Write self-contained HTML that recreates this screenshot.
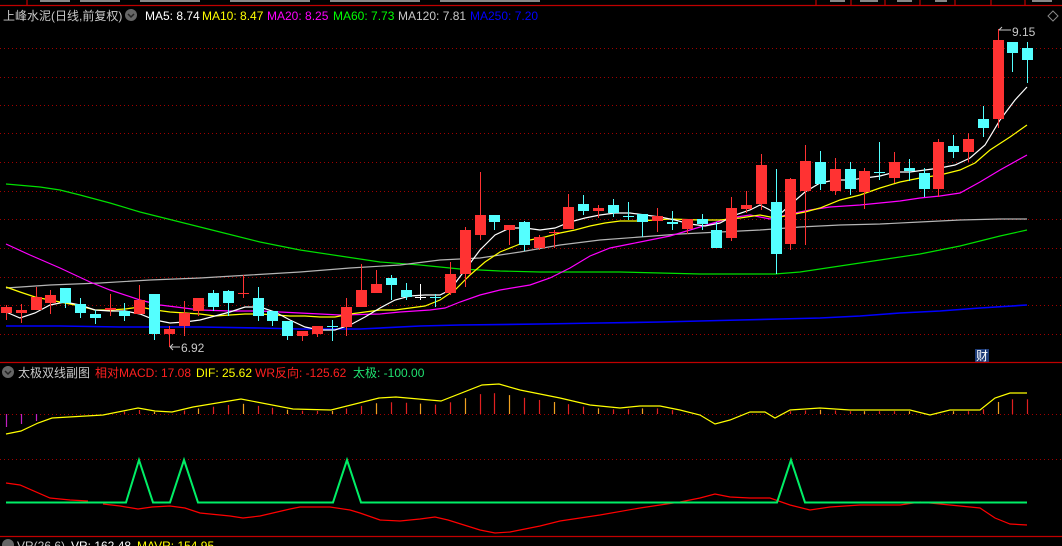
<!DOCTYPE html>
<html><head><meta charset="utf-8">
<style>
html,body{margin:0;padding:0;background:#000;width:1062px;height:546px;overflow:hidden;}
svg{position:absolute;left:0;top:0;}
.t{font-family:"Liberation Sans","Noto Sans CJK SC",sans-serif;font-size:12px;}
</style></head><body>
<svg id="s" width="1062" height="546" viewBox="0 0 1062 546" xmlns="http://www.w3.org/2000/svg">
<rect width="1062" height="546" fill="#000"/>
<g stroke="#c00000" stroke-width="1.2">
<line x1="0" y1="5.5" x2="1062" y2="5.5"/>
<line x1="27" y1="0" x2="27" y2="5"/>
<line x1="816" y1="0" x2="816" y2="5"/><line x1="851" y1="0" x2="851" y2="5"/>
<line x1="885" y1="0" x2="885" y2="5"/><line x1="920" y1="0" x2="920" y2="5"/>
<line x1="955" y1="0" x2="955" y2="5"/><line x1="991" y1="0" x2="991" y2="5"/>
<line x1="1025" y1="0" x2="1025" y2="5"/>
</g>
<g fill="#888"><rect x="40" y="0" width="30" height="2"/><rect x="80" y="0" width="40" height="2"/><rect x="140" y="0" width="60" height="2"/><rect x="230" y="0" width="80" height="2"/><rect x="330" y="0" width="90" height="2"/><rect x="440" y="0" width="100" height="2"/><rect x="830" y="0" width="15" height="2"/><rect x="860" y="0" width="18" height="2"/><rect x="897" y="0" width="15" height="2"/><rect x="935" y="0" width="12" height="2"/><rect x="1032" y="0" width="20" height="2"/></g>
<g id="grid" stroke="#a00000" stroke-width="1" stroke-dasharray="1,3"></g>
<text class="t" x="3" y="20" fill="#c8c8c8">上峰水泥(日线,前复权)</text>
<circle cx="131" cy="15" r="6" fill="#666"/><path d="M128 14 l3 3 l3 -3" stroke="#222" stroke-width="1.5" fill="none"/>
<text class="t" x="145" y="20" fill="#fff">MA5: 8.74</text>
<text class="t" x="202" y="20" fill="#ffff00">MA10: 8.47</text>
<text class="t" x="267" y="20" fill="#ff00ff">MA20: 8.25</text>
<text class="t" x="333" y="20" fill="#00ff00">MA60: 7.73</text>
<text class="t" x="398" y="20" fill="#c8c8c8">MA120: 7.81</text>
<text class="t" x="470" y="20" fill="#0000ff">MA250: 7.20</text>
<path d="M1053 11 l5 5 l-5 5 l-5 -5 z" stroke="#888" fill="none"/>
<g id="lines" fill="none" stroke-width="1.2"></g>
<g id="candles"></g>
<text class="t" x="1012" y="36" fill="#c8c8c8">9.15</text>
<path d="M999 30 l3 -3 M999 30 h12" stroke="#c8c8c8" fill="none"/>
<text class="t" x="181" y="352" fill="#c8c8c8">6.92</text>
<path d="M170 347 l3 -3 M170 347 l3 3 M170 347 h10" stroke="#c8c8c8" fill="none"/>
<rect x="975" y="349" width="14" height="13" fill="#1e3c78"/>
<text class="t" x="976" y="360" fill="#fff" font-size="11">财</text>
<line x1="0" y1="362.5" x2="1062" y2="362.5" stroke="#c00000" stroke-width="1.2"/>
<circle cx="8" cy="372" r="6" fill="#666"/><path d="M5 371 l3 3 l3 -3" stroke="#222" stroke-width="1.5" fill="none"/>
<text class="t" x="18" y="377" fill="#c8c8c8">太极双线副图</text>
<text class="t" x="95" y="377" fill="#ff2020">相对MACD: 17.08</text>
<text class="t" x="196" y="377" fill="#ffff00">DIF: 25.62</text>
<text class="t" x="255" y="377" fill="#ff2020">WR反向: -125.62</text>
<text class="t" x="353" y="377" fill="#20e070">太极: -100.00</text>
<line x1="0" y1="414.5" x2="1062" y2="414.5" stroke="#a00000" stroke-dasharray="1,3"/>
<line x1="0" y1="459.5" x2="1062" y2="459.5" stroke="#a00000" stroke-dasharray="1,3"/>
<g id="sub" fill="none"></g>
<line x1="0" y1="536.5" x2="1062" y2="536.5" stroke="#c00000" stroke-width="1.2"/>
<circle cx="8" cy="545" r="6" fill="#666"/>
<text class="t" x="17" y="550" fill="#c8c8c8">VR(26,6)</text>
<text class="t" x="71" y="550" fill="#fff">VR: 162.48</text>
<text class="t" x="137" y="550" fill="#ffff00">MAVR: 154.95</text>
</svg>
<script>
(function(){
var NS="http://www.w3.org/2000/svg";
function el(p,t,a){var e=document.createElementNS(NS,t);for(var k in a)e.setAttribute(k,a[k]);p.appendChild(e);return e;}
var g=document.getElementById('grid');
[48,77,105,133,162,191,219,248,277,305,334].forEach(function(y){el(g,'line',{x1:0,y1:y+.5,x2:1062,y2:y+.5});});
function pl(p,pts,c,w){el(p,'polyline',{points:pts.map(function(a){return a.join(',')}).join(' '),stroke:c,'stroke-width':w||1.2,fill:'none'});}
var L=document.getElementById('lines');
pl(L,[[6,184],[40,187],[60,190],[80,195],[110,203],[140,212],[180,222],[220,232],[260,242],[300,250],[340,256],[380,262],[420,265],[440,267],[460,269],[480,270],[500,271],[540,272],[580,272],[620,272],[660,273],[700,274],[740,274],[775,274],[800,272],[840,266],[880,260],[920,254],[960,246],[1000,236],[1027,230]],'#00e000');
pl(L,[[6,288],[50,285],[100,283],[150,280],[200,278],[250,275],[300,272],[350,268],[400,265],[440,260],[480,258],[520,252],[560,245],[600,240],[640,237],[680,234],[720,232],[760,230],[800,227],[840,225],[880,224],[920,222],[960,220],[1000,219],[1027,219]],'#b4b4b4');
pl(L,[[6,326],[60,326],[120,327],[200,327],[260,328],[300,329],[360,329],[420,326],[460,325],[540,324],[600,323],[660,322],[700,321],[740,320],[780,319],[820,318],[860,316],[900,313],[940,311],[980,308],[1027,305]],'#0000ff',1.6);
pl(L,[[6,244],[30,255],[60,268],[90,282],[110,290],[140,300],[160,305],[200,310],[230,311],[260,311],[300,313],[340,315],[380,314],[400,312],[430,310],[445,308],[460,302],[480,295],[500,290],[530,285],[550,278],[570,268],[590,256],[610,248],[630,244],[650,240],[670,236],[690,230],[710,224],[730,218],[750,215],[770,219],[790,214],[810,210],[830,207],[860,205],[880,203],[900,201],[920,198],[940,196],[960,193],[980,182],[1000,170],[1027,155]],'#ff00ff');
pl(L,[[6,287],[20,292],[35,297],[50,300],[65,303],[80,306],[95,310],[110,310],[125,309],[140,307],[155,310],[170,312],[185,313],[200,314],[215,316],[230,315],[245,314],[260,314],[275,315],[290,316],[305,316],[320,317],[335,317],[350,314],[365,312],[380,310],[395,310],[410,308],[425,306],[440,300],[455,290],[470,275],[485,262],[500,252],[515,246],[530,240],[545,237],[560,233],[575,230],[590,226],[605,223],[620,221],[640,221],[655,220],[670,219],[700,220],[720,220],[740,218],[760,215],[775,218],[790,215],[805,212],[820,208],[840,200],[860,195],[880,188],[900,182],[920,178],[940,175],[960,170],[975,163],[990,150],[1010,137],[1027,125]],'#ffff00');
pl(L,[[6,312],[20,318],[35,313],[50,305],[65,302],[80,305],[95,310],[110,311],[125,311],[140,314],[155,320],[170,323],[185,322],[200,320],[215,316],[230,312],[245,307],[260,307],[275,312],[290,320],[305,327],[320,330],[335,330],[350,325],[365,317],[380,308],[395,300],[410,296],[425,295],[440,295],[450,290],[465,270],[480,250],[495,235],[510,228],[525,228],[540,230],[555,228],[570,222],[585,218],[600,215],[615,213],[630,213],[645,215],[660,217],[675,220],[690,224],[705,226],[720,223],[735,215],[750,210],[760,205],[770,210],[778,216],[790,205],[805,192],[820,183],[835,180],[850,180],[865,178],[880,176],[895,172],[910,172],[925,170],[940,168],[955,165],[970,158],[985,145],[1000,120],[1015,100],[1027,87]],'#ffffff');
var C=[[307,313,305,320,'r'],[310,313,304,323,'r'],[297,310,287,310,'r'],[295,303,290,314,'r'],[288,303,288,308,'c'],[304,313,298,318,'c'],[314,318,310,324,'c'],[308,310,294,316,'r'],[311,316,303,321,'c'],[300,314,285,314,'r'],[294,334,294,340,'c'],[329,334,326,347,'r'],[313,326,301,336,'r'],[298,311,298,316,'r'],[293,307,290,311,'c'],[291,303,290,316,'c'],[293,294,275,298,'r'],[298,316,287,321,'c'],[311,321,311,326,'c'],[321,336,321,340,'c'],[331,336,331,341,'r'],[326,334,326,337,'r'],[326,327,320,341,'c'],[307,327,298,336,'r'],[290,307,264,307,'r'],[284,293,270,293,'r'],[278,285,275,300,'c'],[290,297,283,300,'c'],[297,298,284,300,'w'],[297,298,294,307,'c'],[274,293,262,295,'r'],[230,274,227,287,'r'],[215,235,172,240,'r'],[215,222,215,230,'c'],[225,230,225,245,'r'],[222,245,221,251,'c'],[237,248,235,250,'r'],[232,233,230,248,'r'],[207,229,194,229,'r'],[204,211,195,215,'c'],[208,211,205,218,'r'],[205,213,199,217,'c'],[216,217,202,220,'c'],[214,222,214,237,'c'],[216,221,208,232,'r'],[222,224,211,230,'c'],[219,229,219,234,'r'],[219,224,214,230,'c'],[230,248,222,248,'c'],[208,238,197,241,'r'],[205,209,191,213,'r'],[165,204,154,210,'r'],[202,254,169,274,'c'],[179,244,178,250,'r'],[161,191,145,245,'r'],[162,184,151,190,'c'],[169,191,158,195,'r'],[169,189,162,195,'c'],[171,192,168,209,'r'],[172,173,142,180,'c'],[162,178,152,183,'r'],[168,171,159,181,'c'],[173,189,168,197,'c'],[142,189,139,197,'r'],[146,152,135,158,'c'],[139,152,133,162,'r'],[119,128,106,137,'c'],[40,119,29,128,'r'],[42,53,42,72,'c'],[48,60,42,83,'c']];
var G=document.getElementById('candles');
var col={r:'#ff3232',c:'#54ffff',w:'#ffffff'};
C.forEach(function(d,i){var x=Math.round(6+14.8*i);var c=col[d[4]];
el(G,'rect',{x:x,y:d[2],width:1,height:d[3]-d[2],fill:c});
var h=Math.max(1,d[1]-d[0]);el(G,'rect',{x:x-5,y:d[0],width:11,height:h,fill:c});});
var S=document.getElementById('sub');
var dif=[[6,434],[21,431],[38,423],[52,418],[69,417],[103,415],[138,408],[155,411],[172,412],[193,407],[241,399],[293,409],[331,410],[379,398],[396,397],[441,401],[482,385],[499,384],[520,390],[540,394],[560,398],[590,405],[620,408],[640,406],[660,406],[680,410],[700,415],[715,424],[730,420],[750,412],[765,412],[775,418],[790,410],[820,408],[850,410],[880,410],[910,410],[930,415],[950,410],[980,410],[995,398],[1010,393],[1027,393]];
function difAt(x){for(var k=0;k<dif.length-1;k++){if(x<=dif[k+1][0]){var a=dif[k],b=dif[k+1];return a[1]+(b[1]-a[1])*(x-a[0])/(b[0]-a[0]);}}return 393;}
for(var i=0;i<70;i++){var x=Math.round(6+14.8*i)+.5;var y=difAt(x);
 if(i<3){el(S,'line',{x1:x,y1:414,x2:x,y2:427-i*3,stroke:'#c020c0','stroke-width':1.2});continue;}
 var tp=414-(414-y)*0.7; if(tp>=412) continue;
 el(S,'line',{x1:x,y1:414,x2:x,y2:tp,stroke:(i%3==1?'#f0a020':'#e02020'),'stroke-width':1.2});}
pl(S,dif,'#ffff00',1.2);
pl(S,[[6,483],[20,485],[50,498],[70,500],[88,501]],'#ff0000',1.2);
pl(S,[[103,504],[120,506],[138,509],[152,507],[170,506],[185,508],[200,513],[230,516],[243,518],[260,516],[290,509],[300,507],[330,507],[350,510],[360,513],[380,520],[400,521],[420,519],[435,517],[448,520],[480,530],[495,533],[510,532],[530,528],[540,526],[560,521],[600,515],[640,508],[680,502],[700,498],[715,494],[730,497],[750,498],[770,498],[790,505],[810,510],[830,507],[860,505],[900,505],[920,502],[940,504],[960,506],[980,508],[995,518],[1010,524],[1027,525]],'#ff0000',1.2);
pl(S,[[6,502.5],[126,502.5],[139,460],[153,502.5],[170,502.5],[184,460],[198,502.5],[333,502.5],[347,460],[361,502.5],[777,502.5],[791,460],[805,502.5],[1027,502.5]],'#00ee66',2);
})();
</script>
</body></html>
